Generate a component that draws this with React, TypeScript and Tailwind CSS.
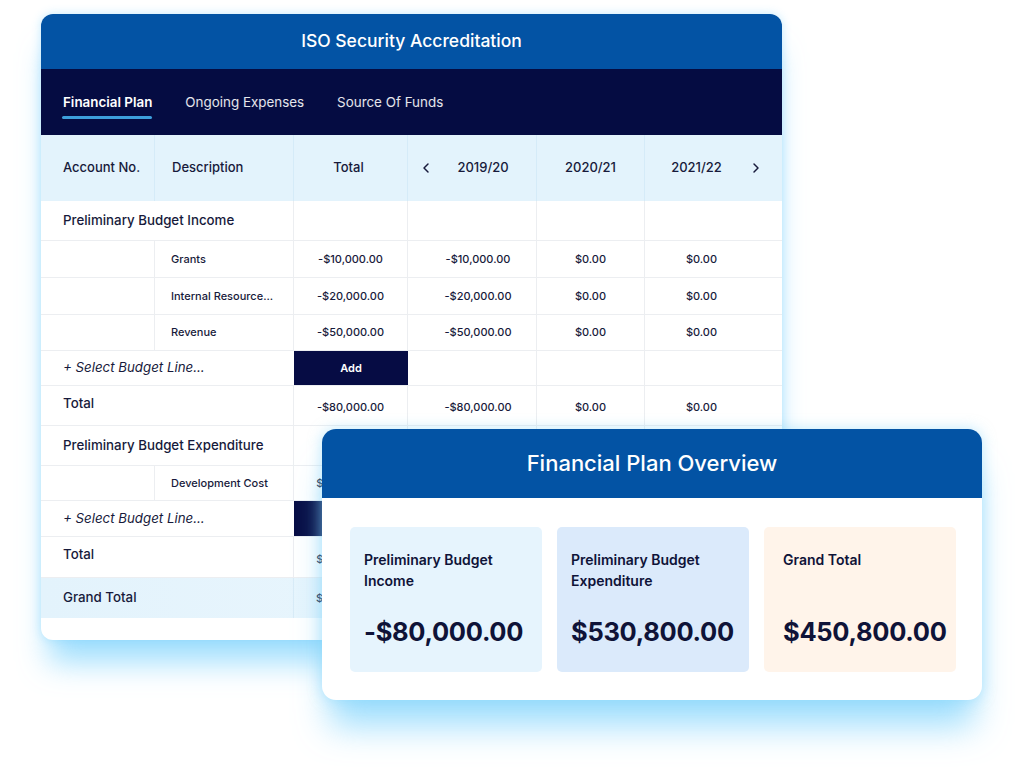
import { ChevronLeft, ChevronRight } from 'lucide-react';

const FONT = { fontFamily: 'Inter, Lato, "Noto Sans", sans-serif' };

const COLS = 'grid grid-cols-[114px_139px_114px_129px_108px_137px]';
const CELL = 'flex items-center justify-center border-r border-[#eceef1]';

type Line = { label: string; total: string; y1: string; y2: string; y3: string; h: string };

const incomeLines: Line[] = [
  { label: 'Grants', total: '-$10,000.00', y1: '-$10,000.00', y2: '$0.00', y3: '$0.00', h: 'h-[37px]' },
  { label: 'Internal Resource...', total: '-$20,000.00', y1: '-$20,000.00', y2: '$0.00', y3: '$0.00', h: 'h-[37px]' },
  { label: 'Revenue', total: '-$50,000.00', y1: '-$50,000.00', y2: '$0.00', y3: '$0.00', h: 'h-[36px]' },
];

function GroupRow({ title, h }: { title: string; h: string }) {
  return (
    <div className={`${COLS} ${h} border-b border-[#eceef1]`}>
      <div className="col-span-2 flex items-center pl-[22px] text-[13.3px] font-medium border-r border-[#eceef1]">
        {title}
      </div>
      <div className={CELL} />
      <div className={CELL} />
      <div className={CELL} />
      <div />
    </div>
  );
}

function LineRow({ line }: { line: Line }) {
  return (
    <div className={`${COLS} ${line.h} border-b border-[#eceef1] text-[11px] font-medium`}>
      <div className="border-r border-[#eceef1]" />
      <div className="flex items-center pl-[16px] border-r border-[#eceef1] whitespace-nowrap overflow-hidden">
        {line.label}
      </div>
      <div className={`${CELL} overflow-hidden`}>{line.total}</div>
      <div className={CELL}>
        <span className="pl-3">{line.y1}</span>
      </div>
      <div className={CELL}>{line.y2}</div>
      <div className="flex items-center justify-center pr-6">{line.y3}</div>
    </div>
  );
}

function SelectRow({ h }: { h: string }) {
  return (
    <div className={`${COLS} ${h} border-b border-[#eceef1]`}>
      <div className="col-span-2 flex items-center pl-[22px] text-[13.3px] italic">+ Select Budget Line...</div>
      <div className="flex items-center justify-center bg-[#060c44] text-white text-[11px] font-semibold">Add</div>
      <div className={CELL} />
      <div className={CELL} />
      <div />
    </div>
  );
}

function TotalRow({ h, values }: { h: string; values: string[] }) {
  return (
    <div className={`${COLS} ${h} border-b border-[#eceef1]`}>
      <div className="col-span-2 flex items-center pl-[22px] pb-1 text-[13.3px] font-medium border-r border-[#eceef1]">
        Total
      </div>
      <div className={`${CELL} text-[11px] font-medium pt-1 overflow-hidden`}>{values[0]}</div>
      <div className={`${CELL} text-[11px] font-medium pt-1`}>
        <span className="pl-3">{values[1]}</span>
      </div>
      <div className={`${CELL} text-[11px] font-medium pt-1`}>{values[2]}</div>
      <div className="flex items-center justify-center pr-6 text-[11px] font-medium pt-1">{values[3]}</div>
    </div>
  );
}

function MainCard() {
  return (
    <div className="ml-[41px] w-[741px] rounded-xl bg-white overflow-hidden text-[#171a3b] shadow-[0_0_10px_rgba(125,211,252,0.45),0_30px_30px_-8px_rgba(125,211,252,0.75)]">
      <div className="h-[55px] bg-[#0353a4] flex items-center justify-center text-white text-[17.5px] font-medium">
        ISO Security Accreditation
      </div>
      <div className="h-[66px] bg-[#050c42] flex items-center gap-[33px] pl-[22px] text-[13.4px] text-white/90">
        <div className="relative font-semibold text-white">
          Financial Plan
          <div className="absolute -left-px right-0 top-[24px] h-[3px] rounded-full bg-[#3d9fdc]" />
        </div>
        <div>Ongoing Expenses</div>
        <div>Source Of Funds</div>
      </div>

      <div className={`${COLS} h-[66px] bg-[#e3f3fc] text-[13px] font-medium`}>
        <div className="flex items-center pl-[22px] border-r border-[#d5ebf8]">Account No.</div>
        <div className="flex items-center pl-[17px] border-r border-[#d5ebf8]">Description</div>
        <div className="flex items-center justify-center pr-1 border-r border-[#d5ebf8]">Total</div>
        <div className="flex items-center pl-[10px] border-r border-[#d5ebf8]">
          <ChevronLeft size={16} strokeWidth={2.2} />
          <span className="flex-1 text-center pr-1">2019/20</span>
        </div>
        <div className="flex items-center justify-center border-r border-[#d5ebf8]">2020/21</div>
        <div className="flex items-center pr-[18px]">
          <span className="flex-1 text-center">2021/22</span>
          <ChevronRight size={16} strokeWidth={2.2} />
        </div>
      </div>

      <GroupRow title="Preliminary Budget Income" h="h-[40px]" />
      {incomeLines.map((l) => (
        <LineRow key={l.label} line={l} />
      ))}
      <SelectRow h="h-[35px]" />
      <TotalRow h="h-[40px]" values={['-$80,000.00', '-$80,000.00', '$0.00', '$0.00']} />

      {/* rows below sit mostly under the overview card; only the left edge of "Total" shows */}
      <GroupRow title="Preliminary Budget Expenditure" h="h-[40px]" />
      <LineRow line={{ label: 'Development Cost', total: '$530,800.00', y1: '', y2: '', y3: '', h: 'h-[35px]' }} />
      <SelectRow h="h-[36px]" />
      <TotalRow h="h-[41px]" values={['$530,800.00', '', '', '']} />

      <div className={`${COLS} h-[40px] bg-gradient-to-r from-[#e3f3fc] to-[#eef8fe]`}>
        <div className="col-span-2 flex items-center pl-[22px] text-[13.3px] font-medium border-r border-[#d8ecf7]">
          Grand Total
        </div>
        <div className="flex items-center justify-center text-[11px] font-medium border-r border-[#d8ecf7] overflow-hidden">
          $450,800.00
        </div>
        <div className="border-r border-[#d8ecf7]" />
        <div className="border-r border-[#d8ecf7]" />
        <div />
      </div>
      <div className="h-[22px]" />
    </div>
  );
}

const summary = [
  { label: 'Preliminary Budget Income', value: '-$80,000.00', bg: 'bg-[#e6f4fd]', pad: 'pl-[14px]' },
  { label: 'Preliminary Budget Expenditure', value: '$530,800.00', bg: 'bg-[#dbeafb]', pad: 'pl-[14px]' },
  { label: 'Grand Total', value: '$450,800.00', bg: 'bg-[#fff4ea]', pad: 'pl-[19px]' },
];

function Overview() {
  return (
    <div className="absolute left-[322px] top-[429px] w-[660px] rounded-[14px] bg-white overflow-hidden text-[#0f1338] shadow-[0_0_14px_rgba(125,211,252,0.5),0_34px_34px_-8px_rgba(125,211,252,0.75)]">
      <div className="h-[69px] bg-[#0353a4] flex items-center justify-center text-white text-[22px] font-medium">
        Financial Plan Overview
      </div>
      <div className="flex gap-[15px] pl-[28px] pr-[25px] pt-[29px] pb-[28px]">
        {summary.map((s) => (
          <div key={s.value} className={`w-[192px] h-[145px] rounded-[5px] ${s.bg} ${s.pad} pt-[22px] flex flex-col`}>
            <div className="h-[50px] w-[150px] text-[14px] font-semibold leading-[21px]">{s.label}</div>
            <div className="mt-[20px] text-[25.5px] font-bold leading-none tracking-[-0.3px]">{s.value}</div>
          </div>
        ))}
      </div>
    </div>
  );
}

export default function App() {
  return (
    <div className="relative w-[1024px] h-[770px] bg-white pt-[14px]" style={FONT}>
      <MainCard />
      <Overview />
    </div>
  );
}
